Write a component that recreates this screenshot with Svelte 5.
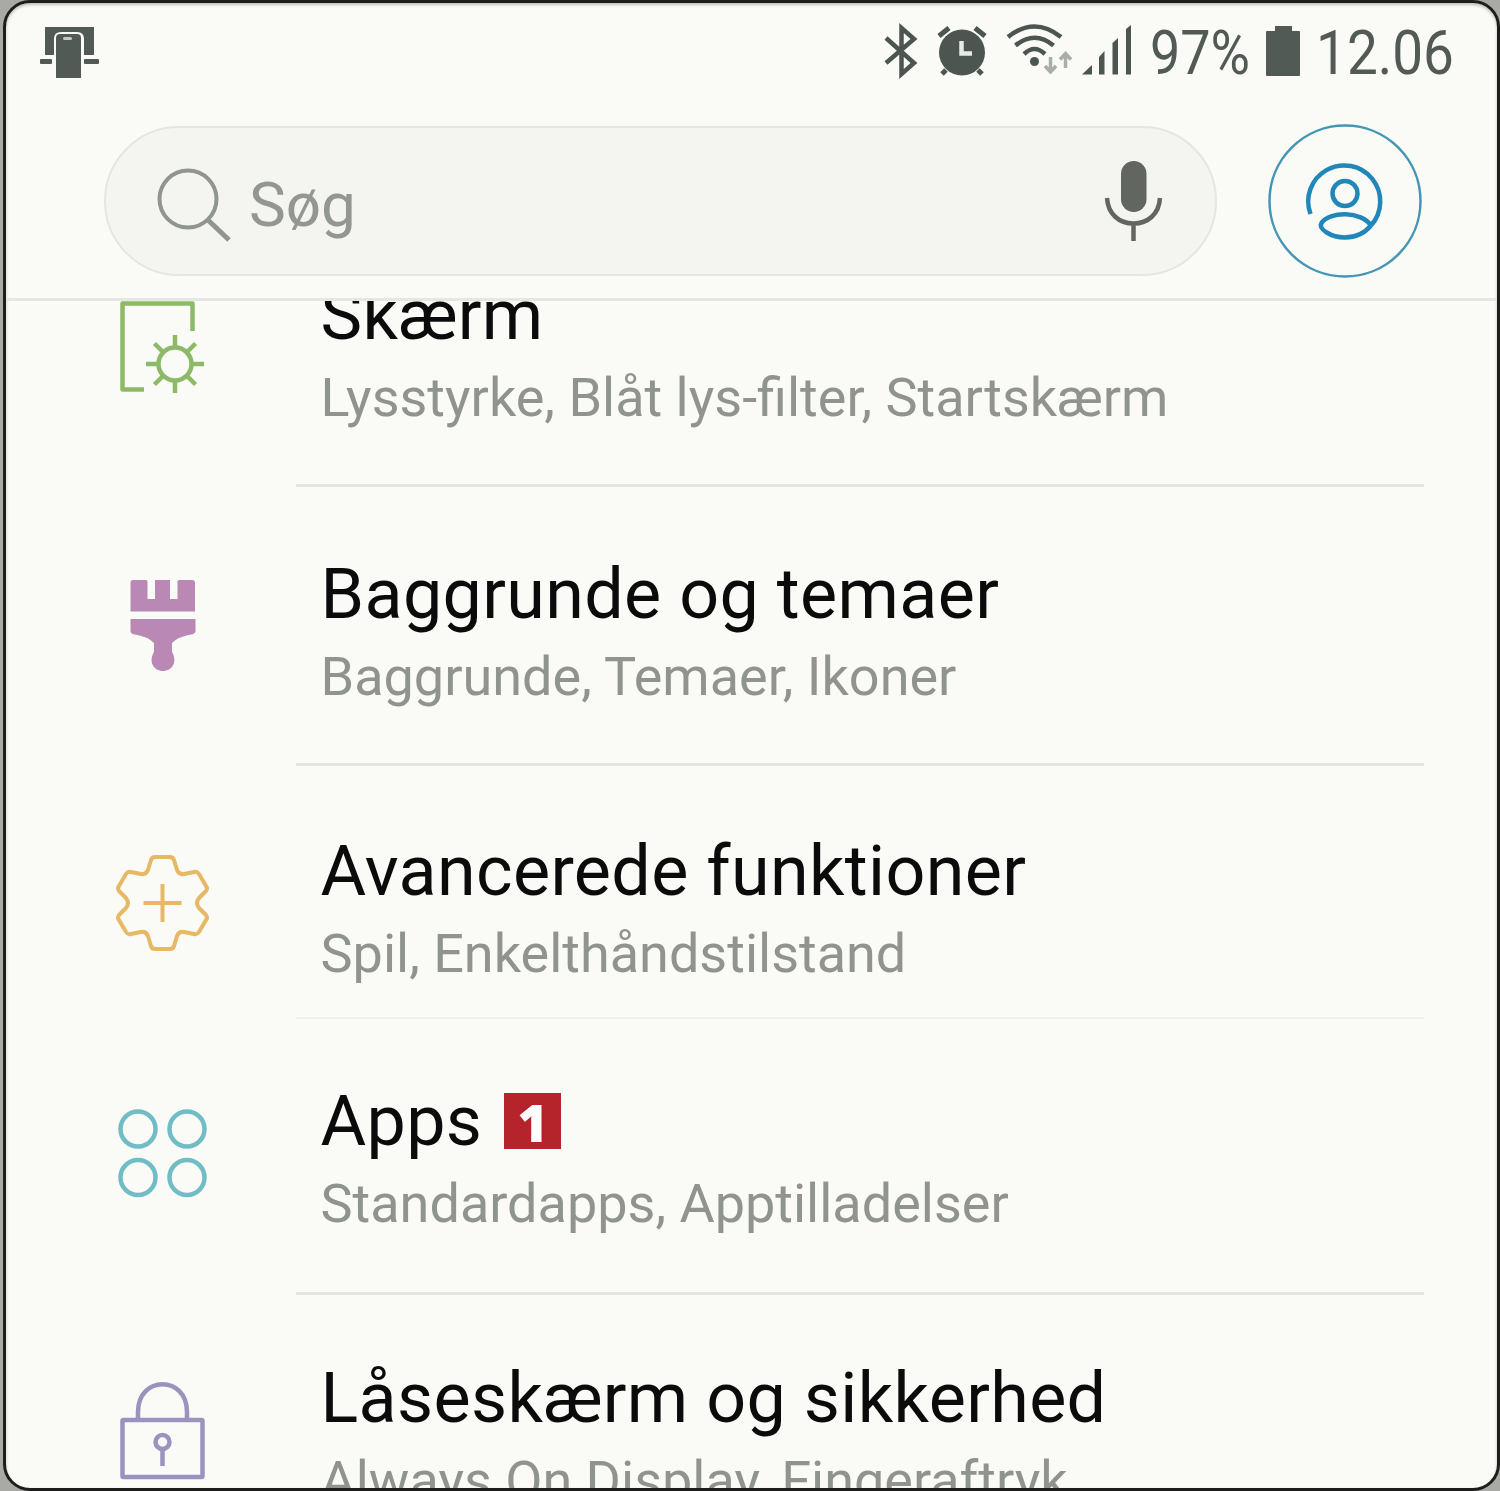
<script>
  // rows keep their own height and top padding, the list is mid-scroll
  const rows = [
    { icon: 'display', title: 'Skærm', sub: 'Lysstyrke, Blåt lys-filter, Startskærm', height: 279, top: 67 },
    { icon: 'brush', title: 'Baggrunde og temaer', sub: 'Baggrunde, Temaer, Ikoner', height: 279, top: 67 },
    { icon: 'gear', title: 'Avancerede funktioner', sub: 'Spil, Enkelthåndstilstand', height: 253, top: 65, faint: true },
    { icon: 'apps', title: 'Apps', sub: 'Standardapps, Apptilladelser', height: 276, top: 62, badge: 1 },
    { icon: 'lock', title: 'Låseskærm og sikkerhed', sub: 'Always On Display, Fingeraftryk', height: 276, top: 63 }
  ]

  const angles = [0, 45, 90, 135, 180, 225, 270, 315]
</script>

<div class="phone">
  <header>
    <div class="status">
      <svg class="notice" width="60" height="56" viewBox="0 0 60 56" fill="#525a55">
        <path d="M5 2H54V30H44V14Q44 7 37 7H21Q14 7 14 14V30H5Z" />
        <path d="M16 13q0-4 4-4h17q4 0 4 4v40H16z" />
        <rect x="23" y="12" width="9" height="3" rx="1.5" fill="#c5cac5" />
        <rect x="0" y="34" width="12" height="5" rx="1" />
        <rect x="44" y="34" width="15" height="5" rx="1" />
      </svg>

      <svg class="signals" width="260" height="60" viewBox="880 20 260 60" fill="none" stroke="#4d5550">
        <path d="M886 38L914 63L901.5 74V28L914 39L886 63" stroke-width="4.5" />

        <circle cx="962" cy="52.5" r="23" fill="#4d5550" stroke="none" />
        <path d="M939 36l10-8M985 36l-10-8" stroke-width="5" />
        <path d="M946 70l-4 4M978 70l4 4" stroke-width="5" />
        <path d="M961.5 41V53.5H972" stroke="#e8eae6" stroke-width="4.5" />

        <path d="M1008 37Q1034.5 16 1061 37" stroke-width="4.5" />
        <path d="M1015.5 45.5Q1034.5 30 1053.5 45.5" stroke-width="4.5" />
        <path d="M1024 54Q1034.5 44 1045 54" stroke-width="4.5" />
        <circle cx="1034.5" cy="61.5" r="4.5" fill="#4d5550" stroke="none" />
        <path d="M1050.5 57V71M1045 66l5.5 6l5.5-6M1065.5 68V54M1060 59.5l5.5-6l5.5 6" stroke="#a9aea9" stroke-width="3.5" />

        <g fill="#4d5550" stroke="none">
          <path d="M1082 74.5L1092 65V74.5Z" />
          <path d="M1099 57l5.5-6V74.5H1099z" />
          <path d="M1112.5 43l5.5-5V74.5H1112.5z" />
          <path d="M1126 29l5-4V74.5H1126z" />
        </g>
      </svg>

      <svg class="readout" width="320" height="60" viewBox="1145 20 320 60" fill="#525a55">
        <text x="1150" y="74" textLength="100" lengthAdjust="spacingAndGlyphs">97%</text>
        <path d="M1275 26h17v5h7q1 0 1 1v43q0 1-1 1h-32q-1 0-1-1V32q0-1 1-1h8z" />
        <text x="1316" y="74" textLength="138" lengthAdjust="spacingAndGlyphs">12.06</text>
      </svg>
    </div>

    <div class="bar">
      <div class="search">
        <svg class="lens" width="80" height="80" viewBox="0 0 80 80" fill="none" stroke="#90958f" stroke-width="4">
          <circle cx="35" cy="35" r="28.5" />
          <path d="M55 56L76 76" stroke-width="5" />
        </svg>
        <span>Søg</span>
        <svg class="mic" width="60" height="84" viewBox="0 0 60 84" fill="none" stroke="#626661" stroke-width="4.5">
          <rect x="17" y="2" width="25.5" height="51" rx="12.75" fill="#626661" stroke="none" />
          <path d="M3 39C4 55 15 64.5 29.5 64.5S55 55 56 39M29.5 65V82" />
        </svg>
      </div>
      <svg class="account" width="156" height="156" viewBox="0 0 156 156" fill="none" stroke="#2087b8">
        <circle cx="78" cy="78" r="75.5" stroke="#4596b5" stroke-width="2.5" />
        <g stroke-width="4.5">
          <path d="M43.5 91A36 36 0 1 1 104 102.5" />
          <circle cx="78" cy="70.5" r="12.5" />
          <path d="M104 102.5C95 88 62 88 54.5 100C51 106 64 114.5 78 114.5Q94 114.5 104 102.5" />
        </g>
      </svg>
    </div>
  </header>

  <main>
    <ul>
      {#each rows as row}
        <li style:height="{row.height}px">
          <div class="icon" style:padding-top="{row.top + 22}px">
            <svg width="100" height="100" viewBox="0 0 100 100" fill="none" stroke-linejoin="round">
              {#if row.icon === 'display'}
                <g stroke="#8dba68" stroke-width="4.5">
                  <path d="M80.5 34V6.5H10.5V92.5H32" />
                  <circle cx="63" cy="67" r="16.5" />
                  {#each angles as a}
                    <path d="M63 50V38" transform="rotate({a} 63 67)" />
                  {/each}
                </g>
              {:else if row.icon === 'brush'}
                <g fill="#b988b5">
                  <path d="M21 4h13q1.5 0 1.5 1.5V23h7.5V4h15v19h7.5V5.5Q65.5 4 67 4h13q3 0 3 3V35.5H18.5V6.5Q18.5 4 21 4z" />
                  <path d="M18.5 43H83.5V56L81.5 58Q66 60.5 60 67V76C66 86 60 95 51 95S36 86 42 76V67Q36 60.5 20.5 58L18.5 56z" />
                </g>
              {:else if row.icon === 'gear'}
                <g stroke="#e7b965" stroke-width="4">
                  <path d="M43 4H58Q61 4 62 7L65 17Q67 22 72 21L82 19Q85 18 87 21L94 33Q96 35 94 38L87 45Q83 50 87 55L94 62Q96 65 94 67L87 79Q85 82 82 81L72 79Q67 78 65 83L62 93Q61 96 58 96H43Q40 96 39 93L36 83Q34 78 29 79L19 81Q16 82 14 79L7 67Q5 65 7 62L14 55Q18 50 14 45L7 38Q5 35 7 33L14 21Q16 18 19 19L29 21Q34 22 36 17L39 7Q40 4 43 4Z" />
                  <path d="M50.5 31V69M31.5 50H69.5" />
                </g>
              {:else if row.icon === 'apps'}
                <g stroke="#70bdc6" stroke-width="4.5">
                  <circle cx="26" cy="26" r="17.5" />
                  <circle cx="75" cy="26" r="17.5" />
                  <circle cx="26" cy="74.5" r="17.5" />
                  <circle cx="75" cy="74.5" r="17.5" />
                </g>
              {:else}
                <g stroke="#9b92be" stroke-width="4.5">
                  <rect x="10.5" y="40" width="80" height="57" rx="1" />
                  <path d="M26 40V32C26 -5 75 -5 75 32V40" />
                  <circle cx="50.5" cy="62" r="7" />
                  <path d="M50.5 69V86" />
                </g>
              {/if}
            </svg>
          </div>
          <div class="text" class:faint={row.faint} style:padding-top="{row.top}px">
            <h2>
              {row.title}
              {#if row.badge}<b>{row.badge}</b>{/if}
            </h2>
            <p>{row.sub}</p>
          </div>
        </li>
      {/each}
    </ul>
  </main>
</div>

<style>
  :global(body) {
    margin: 0;
    background: #a9a9a6;
  }

  .phone {
    box-sizing: border-box;
    width: 1497px;
    height: 1491px;
    margin-left: 3px;
    border: 3px solid #1d1d1b;
    border-radius: 27px;
    background: #fafaf6;
    overflow: hidden;
    display: flex;
    flex-direction: column;
    font-family: Roboto, sans-serif;
    box-shadow: inset 0 2px 3px #8888;
  }

  header {
    box-sizing: border-box;
    height: 298px;
    flex: none;
    border-bottom: 3px solid #e6e7e3;
  }

  .status {
    box-sizing: border-box;
    display: flex;
    height: 137px;
    padding: 17px 32px 0 34px;
  }

  .notice {
    margin-top: 5px;
  }

  .signals {
    margin-left: auto;
    margin-right: 5px;
  }

  .readout {
    font-size: 62px;
    overflow: visible;
  }

  .bar {
    display: flex;
    align-items: center;
    height: 156px;
    margin-top: -17px;
    padding-left: 98px;
    gap: 50px;
  }

  .search {
    box-sizing: border-box;
    width: 1113px;
    height: 150px;
    border: 2px solid #e5e6e2;
    border-radius: 75px;
    background: #f4f4f1;
    display: flex;
    align-items: center;
    padding: 0 51px 0 47px;
    color: #939792;
    font-size: 62px;
  }

  .search span {
    margin-left: 16px;
    margin-top: 7px;
  }

  .lens {
    margin-top: 6px;
  }

  .mic {
    margin-left: auto;
  }

  main {
    flex: 1;
    min-height: 0;
    overflow: hidden;
  }

  ul {
    list-style: none;
    margin: -93px 0 0;
    padding: 0;
  }

  li {
    display: flex;
  }

  .icon {
    width: 184px;
    padding-left: 106px;
    flex: none;
  }

  .text {
    box-sizing: border-box;
    width: 1128px;
    padding-left: 24.5px;
    border-bottom: 3px solid #e5e6e2;
    white-space: nowrap;
  }

  .text.faint {
    border-bottom: 2px solid #f0f1ed;
  }

  h2 {
    display: flex;
    align-items: center;
    gap: 22px;
    margin: 0;
    color: #0b0b0b;
    font-size: 70px;
    font-weight: 400;
    letter-spacing: 0.35px;
    line-height: 80px;
  }

  b {
    width: 57px;
    height: 56px;
    background: #b5232b;
    color: #fff;
    font: 800 52px/58px "Open Sans", sans-serif;
    text-align: center;
  }

  p {
    margin: 11px 0 0;
    color: #90948f;
    font-size: 54px;
    line-height: 64px;
  }
</style>
